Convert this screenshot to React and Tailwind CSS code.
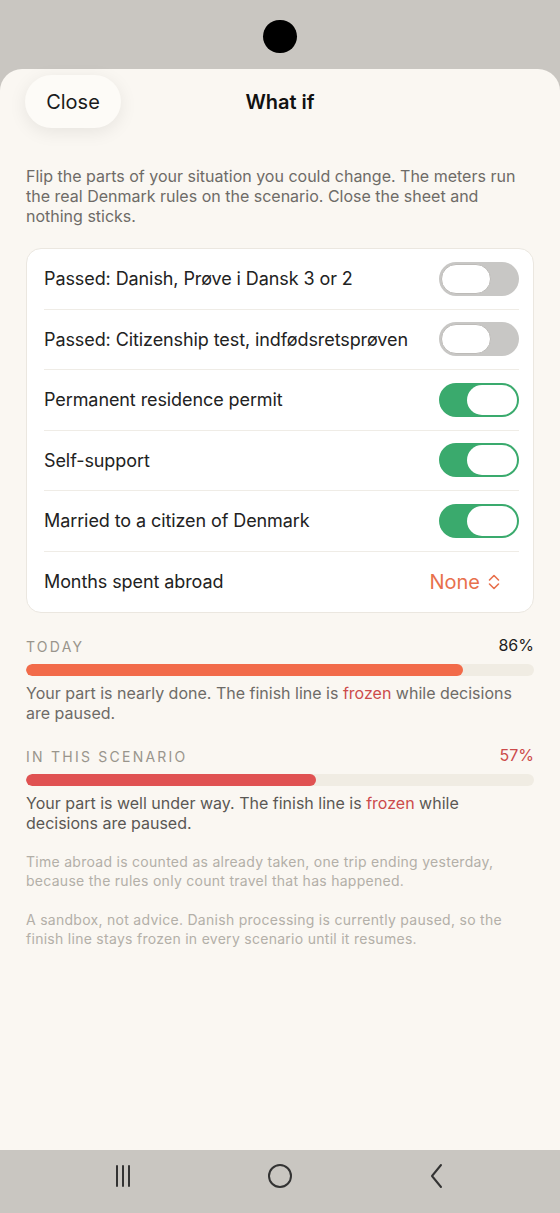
import React from "react";

function Toggle({ on }) {
  return on ? (
    <div className="w-[80px] h-[34px] rounded-full bg-[#3aaa6d] p-[2px] flex justify-end shrink-0">
      <div className="w-[50px] h-[30px] rounded-full bg-white" />
    </div>
  ) : (
    <div className="w-[80px] h-[34px] rounded-full bg-[#c8c7c5] p-[2px] flex justify-start shrink-0">
      <div className="w-[50px] h-[30px] rounded-full bg-white border border-[#bdbbb8]" />
    </div>
  );
}

function Row({ label, children, last }) {
  return (
    <div className="pl-[17px] pr-[14px]">
      <div className={"h-[60.5px] flex items-center justify-between " + (last ? "" : "border-b border-[#efece6]")}>
        <span className="text-[18px] text-[#222] tracking-[-0.005em]">{label}</span>
        {children}
      </div>
    </div>
  );
}

function Meter({ label, pct, pctClass, fill, fillClass, text, darker }) {
  return (
    <div>
      <div className="flex items-end justify-between h-[22px]">
        <span className="text-[14px] tracking-[0.16em] text-[#99958c]">{label}</span>
        <span className={"text-[16px] " + pctClass}>{pct}</span>
      </div>
      <div className="mt-[7px] h-[12px] rounded-full bg-[#f0ece3] overflow-hidden">
        <div className={"h-full rounded-full " + fillClass} style={{ width: fill }} />
      </div>
      <p className={"mt-[7px] text-[16px] leading-[20px] " + (darker ? "text-[#5a5754]" : "text-[#6e6b67]")}>
        {text[0]}
        <span className="text-[#cc4b4b]">frozen</span>
        {text[1]}
      </p>
    </div>
  );
}

export default function App() {
  return (
    <div
      className="w-[560px] h-[1213px] bg-[#c9c6c1] flex flex-col overflow-hidden"
      style={{ fontFamily: "Inter, 'Noto Sans', sans-serif" }}
    >
      <div className="h-[69px] shrink-0 flex justify-center pt-[20px]">
        <div className="w-[34px] h-[33px] rounded-full bg-black" />
      </div>
      <div className="flex-1 bg-[#faf7f2] rounded-t-[22px] px-[26px]">
        <div className="relative h-[66px] flex items-center justify-center">
          <div className="absolute left-[-1px] top-[6px] w-[96px] h-[53px] rounded-full bg-[#fdfbf7] shadow-[0_4px_18px_rgba(0,0,0,0.08)] flex items-center justify-center">
            <span className="text-[20px] text-[#1a1a1a]">Close</span>
          </div>
          <span className="text-[20px] font-semibold text-[#111]">What if</span>
        </div>
        <p className="mt-[31px] text-[16px] leading-[20px] text-[#6e6b67]">
          Flip the parts of your situation you could change. The meters run the real Denmark rules on the scenario. Close the sheet and nothing sticks.
        </p>
        <div className="mt-[22px] bg-white rounded-[15px] border border-[#ebe7e0]">
          <Row label="Passed: Danish, Prøve i Dansk 3 or 2"><Toggle on={false} /></Row>
          <Row label="Passed: Citizenship test, indfødsretsprøven"><Toggle on={false} /></Row>
          <Row label="Permanent residence permit"><Toggle on={true} /></Row>
          <Row label="Self-support"><Toggle on={true} /></Row>
          <Row label="Married to a citizen of Denmark"><Toggle on={true} /></Row>
          <Row label="Months spent abroad" last>
            <span className="flex items-center gap-[8px] text-[20px] text-[#e8704c] pr-[19px]">
              None
              <svg width="12" height="18" viewBox="0 0 12 18" fill="none" stroke="#e8704c" strokeWidth="1.6" strokeLinecap="round" strokeLinejoin="round">
                <path d="M1.5 7 L6 2.5 L10.5 7" />
                <path d="M1.5 11 L6 15.5 L10.5 11" />
              </svg>
            </span>
          </Row>
        </div>
        <div className="mt-[22px]">
          <Meter
            label="TODAY"
            pct="86%"
            pctClass="text-[#1e1e1e]"
            fill="86%"
            fillClass="bg-[#f26b4a]"
            text={["Your part is nearly done. The finish line is ", " while decisions are paused."]}
          />
        </div>
        <div className="mt-[22px]">
          <Meter
            label="IN THIS SCENARIO"
            pct="57%"
            pctClass="text-[#cc4b4b]"
            fill="57%"
            fillClass="bg-[#e05252]"
            darker
            text={["Your part is well under way. The finish line is ", " while decisions are paused."]}
          />
        </div>
        <p className="mt-[20px] text-[14px] leading-[18.5px] tracking-[0.02em] text-[#b3afa8]">
          Time abroad is counted as already taken, one trip ending yesterday, because the rules only count travel that has happened.
        </p>
        <p className="mt-[21px] text-[14px] leading-[18.5px] tracking-[0.02em] text-[#b3afa8]">
          A sandbox, not advice. Danish processing is currently paused, so the finish line stays frozen in every scenario until it resumes.
        </p>
      </div>
      <div className="h-[63px] shrink-0 flex items-center justify-between px-[113px] pb-[12px]">
        <svg width="20" height="26" viewBox="0 0 20 26" stroke="#333" strokeWidth="2" strokeLinecap="round">
          <path d="M4 3 V23 M10 3 V23 M16 3 V23" />
        </svg>
        <svg width="26" height="26" viewBox="0 0 26 26" fill="none" stroke="#333" strokeWidth="2">
          <circle cx="13" cy="13" r="11" />
        </svg>
        <svg width="20" height="26" viewBox="0 0 20 26" fill="none" stroke="#333" strokeWidth="2" strokeLinecap="round" strokeLinejoin="round">
          <path d="M14 2 L5 13 L14 24" />
        </svg>
      </div>
    </div>
  );
}
